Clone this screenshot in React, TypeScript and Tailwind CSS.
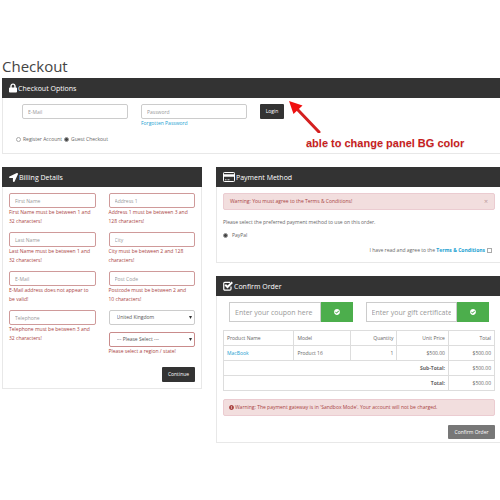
import { ReactNode, useState } from 'react';
import { FaCheckCircle, FaExclamationCircle, FaLocationArrow, FaLock } from 'react-icons/fa';

const CreditCardIcon = () => (
  <svg className="h-[10px] w-[12px]" viewBox="0 0 24 20" fill="none" stroke="currentColor">
    <rect x="1" y="1" width="22" height="18" rx="1.5" strokeWidth="2" />
    <path d="M1 7h22" strokeWidth="5" />
    <path d="M4 15.500h3M9 15.500h4" strokeWidth="1.600" />
  </svg>
);

const CheckBoxIcon = () => (
  <svg className="h-[10px] w-[10px]" viewBox="0 0 20 20" fill="none" stroke="currentColor">
    <path
      d="M16 11v5a2.200 2.200 0 0 1-2.200 2.200H3.700A2.200 2.200 0 0 1 1.500 16V4.800A2.200 2.200 0 0 1 3.700 2.600H14"
      strokeWidth="2.400"
    />
    <path d="M4.500 7.500L9 12L18.500 2.500" strokeWidth="4" />
  </svg>
);

function Panel({
  icon,
  title,
  bleed = false,
  children,
}: {
  icon: ReactNode;
  title: string;
  bleed?: boolean;
  children: ReactNode;
}) {
  return (
    <section className={`border border-[#e8e8e8] bg-white ${bleed ? 'border-r-0' : ''}`}>
      <h2
        className={`-mt-px -ml-px flex h-5 items-center gap-px bg-[#333] pl-[7px] text-[7px] text-white ${bleed ? '' : '-mr-px'}`}
      >
        {icon}
        {title}
      </h2>
      {children}
    </section>
  );
}

function Field({ label, error, type = 'text' }: { label: string; error: string; type?: string }) {
  return (
    <div className="h-[33px]">
      <input
        type={type}
        aria-label={label}
        placeholder={label}
        className="block h-[15px] w-full rounded-[2px] border border-[#cf9a9a] px-[5px] placeholder:text-[#999]"
      />
      <p className="pr-[3px] leading-[9px] text-[#a94442]">{error}</p>
    </div>
  );
}

function Select({ label, option, className }: { label: string; option: string; className: string }) {
  return (
    <div className="relative">
      <select
        aria-label={label}
        className={`block h-[15px] w-full appearance-none rounded-[2px] border bg-white px-[7px] text-[#555] ${className}`}
      >
        <option>{option}</option>
      </select>
      <svg className="pointer-events-none absolute top-[6px] right-[3px] h-[3px] w-[3px]" viewBox="0 0 4 4">
        <path d="M0 0h4L2 4z" fill="#333" />
      </svg>
    </div>
  );
}

function Voucher({ label }: { label: string }) {
  return (
    <form className="flex h-5 min-w-0 flex-1" onSubmit={(e) => e.preventDefault()}>
      <input
        type="text"
        aria-label={label}
        placeholder={label}
        className="min-w-0 flex-1 border border-[#ccc] px-[5px] text-[7px] font-medium placeholder:text-[#999]"
      />
      <button aria-label="Apply" className="flex w-8 items-center justify-center bg-[#4cae4c] text-white">
        <FaCheckCircle className="h-[6px] w-[6px]" />
      </button>
    </form>
  );
}

const radio =
  'h-[5px] w-[5px] appearance-none rounded-full border border-[#aaa] bg-white checked:border-[#999] checked:bg-[#444]';
const button = 'h-[15px] rounded-[1px] bg-[#333] text-white';
const cell = 'border border-[#ddd] px-[3px]';

export default function App() {
  const [account, setAccount] = useState('guest');

  return (
    <main className="pt-14 pb-14 pl-[2px] font-['Open_Sans',sans-serif] text-[5px] leading-[9px] text-[#666]">
      <h1 className="mb-[2px] text-[15px] leading-5 text-[#444]">Checkout</h1>

      <Panel bleed icon={<FaLock className="h-[10px] w-[8px]" />} title="Checkout Options">
        <div className="relative h-[55px] pt-[6px]">
          <div className="flex items-start gap-[13px] pl-[19px]">
            <input
              type="email"
              aria-label="E-Mail"
              placeholder="E-Mail"
              className="h-[15px] w-[106px] rounded-[2px] border border-[#ccc] px-[5px] placeholder:text-[#999]"
            />
            <div className="w-[106px]">
              <input
                type="password"
                aria-label="Password"
                placeholder="Password"
                className="block h-[15px] w-full rounded-[2px] border border-[#ccc] px-[5px] placeholder:text-[#999]"
              />
              <a href="#" className="block text-[#23a1d1]">Forgotten Password</a>
            </div>
            <button className={`${button} w-6`}>Login</button>
          </div>
          <div className="mt-[7px] flex gap-[2px] pl-[13px]">
            <label className="flex items-center gap-[2px]">
              <input
                type="radio"
                name="account"
                className={radio}
                checked={account === 'register'}
                onChange={() => setAccount('register')}
              />
              Register Account
            </label>
            <label className="flex items-center gap-[2px]">
              <input
                type="radio"
                name="account"
                className={radio}
                checked={account === 'guest'}
                onChange={() => setAccount('guest')}
              />
              Guest Checkout
            </label>
          </div>

          {/* callout */}
          <div className="absolute top-[3px] left-[286px]">
            <svg className="h-8 w-8" viewBox="0 0 32 32">
              <path d="M9 9L30 31" stroke="#d42020" strokeWidth="3" strokeLinecap="round" />
              <path d="M0 0L13.500 4.500L4.500 13z" fill="#f01010" />
            </svg>
            <p className="pl-[17px] font-['Liberation_Sans',sans-serif] text-[11px] leading-5 font-bold whitespace-nowrap text-[#c81e1e] text-shadow-2xs">
              able to change panel BG color
            </p>
          </div>
        </div>
      </Panel>

      <div className="mt-[13px] grid grid-cols-[minmax(0,50fr)_minmax(0,71fr)] items-start gap-[14px]">
        <Panel icon={<FaLocationArrow className="h-[9px] w-[9px]" />} title="Billing Details">
          <div className="px-[6px] pt-[6px] pb-[6px]">
            <div className="grid grid-cols-2 gap-x-[13px] gap-y-[6px]">
              <Field label="First Name" error="First Name must be between 1 and 32 characters!" />
              <Field label="Address 1" error="Address 1 must be between 3 and 128 characters!" />
              <Field label="Last Name" error="Last Name must be between 1 and 32 characters!" />
              <Field label="City" error="City must be between 2 and 128 characters!" />
              <Field label="E-Mail" type="email" error="E-Mail address does not appear to be valid!" />
              <Field label="Post Code" error="Postcode must be between 2 and 10 characters!" />
              <Field label="Telephone" type="tel" error="Telephone must be between 3 and 32 characters!" />
              <div>
                <Select label="Country" option="United Kingdom" className="border-[#ccc]" />
                <div className="mt-[7px]">
                  <Select label="Region / State" option="--- Please Select ---" className="border-[#c98b8b]" />
                </div>
                <p className="text-[#a94442]">Please select a region / state!</p>
              </div>
            </div>
            <div className="mt-[11px] flex justify-end">
              <button className={`${button} w-[33px]`}>Continue</button>
            </div>
          </div>
        </Panel>

        <div className="flex flex-col gap-[13px]">
          <Panel bleed icon={<CreditCardIcon />} title="Payment Method">
            <div className="pt-[6px] pr-[5px] pb-[7px] pl-[6px]">
              <div className="flex h-[17px] items-center justify-between rounded-[2px] border border-[#ebccd1] bg-[#f2dede] px-[6px] text-[#a94442]">
                Warning: You must agree to the Terms &amp; Conditions!
                <button aria-label="Close" className="text-[7px] text-[#b99]">×</button>
              </div>
              <p className="mt-2">Please select the preferred payment method to use on this order.</p>
              <label className="mt-1 flex items-center gap-1">
                <input type="radio" name="payment" className={radio} defaultChecked />
                PayPal
              </label>
              <div className="mt-[6px] flex items-center justify-end pr-[3px]">
                <label htmlFor="agree">I have read and agree to the&nbsp;</label>
                <a href="#" className="font-bold text-[#23a1d1]">Terms &amp; Conditions</a>
                <input
                  id="agree"
                  type="checkbox"
                  className="ml-[2px] h-[5px] w-[5px] appearance-none border border-[#aaa] bg-white checked:bg-[#444]"
                />
              </div>
            </div>
          </Panel>

          <Panel bleed icon={<CheckBoxIcon />} title="Confirm Order">
            <div className="pt-[6px] pr-[5px] pb-[3px] pl-[6px]">
              <div className="flex gap-[13px] px-[6px]">
                <Voucher label="Enter your coupon here" />
                <Voucher label="Enter your gift certificate code here" />
              </div>

              <table className="mt-2 w-full table-fixed border-collapse">
                <colgroup>
                  <col className="w-[26%]" />
                  <col className="w-[21%]" />
                  <col className="w-[17%]" />
                  <col className="w-[19%]" />
                  <col className="w-[17%]" />
                </colgroup>
                <thead>
                  <tr className="h-[15px]">
                    <th className={`${cell} text-left font-normal`}>Product Name</th>
                    <th className={`${cell} text-left font-normal`}>Model</th>
                    <th className={`${cell} text-right font-normal`}>Quantity</th>
                    <th className={`${cell} text-right font-normal`}>Unit Price</th>
                    <th className={`${cell} text-right font-normal`}>Total</th>
                  </tr>
                </thead>
                <tbody>
                  <tr className="h-[15px]">
                    <td className={cell}><a href="#" className="text-[#23a1d1]">MacBook</a></td>
                    <td className={cell}>Product 16</td>
                    <td className={`${cell} text-right`}>1</td>
                    <td className={`${cell} text-right`}>$500.00</td>
                    <td className={`${cell} text-right`}>$500.00</td>
                  </tr>
                  <tr className="h-[15px]">
                    <th colSpan={4} className={`${cell} text-right font-bold`}>Sub-Total:</th>
                    <td className={`${cell} text-right`}>$500.00</td>
                  </tr>
                  <tr className="h-[15px]">
                    <th colSpan={4} className={`${cell} text-right font-bold`}>Total:</th>
                    <td className={`${cell} text-right`}>$500.00</td>
                  </tr>
                </tbody>
              </table>

              <div className="mt-2 flex h-[17px] items-center gap-px rounded-[2px] border border-[#ebccd1] bg-[#f2dede] px-[5px] text-[#a94442]">
                <FaExclamationCircle className="h-[5px] w-[5px]" />
                Warning: The payment gateway is in 'Sandbox Mode'. Your account will not be charged.
              </div>
              <div className="mt-[9px] flex justify-end">
                <button className="h-[14px] w-[47px] rounded-[1px] bg-[#777] text-white">Confirm Order</button>
              </div>
            </div>
          </Panel>
        </div>
      </div>
    </main>
  );
}
